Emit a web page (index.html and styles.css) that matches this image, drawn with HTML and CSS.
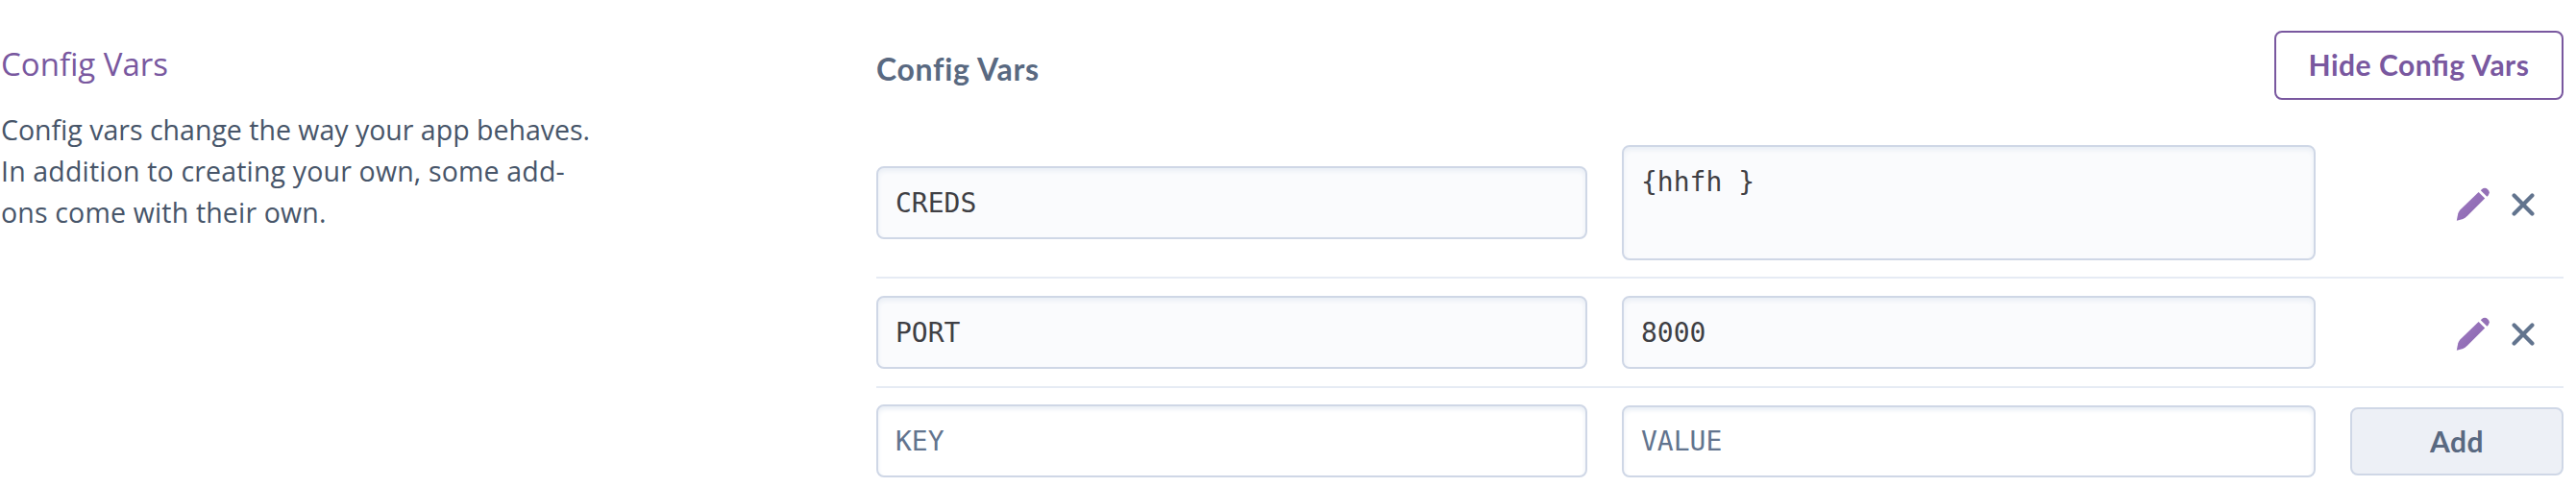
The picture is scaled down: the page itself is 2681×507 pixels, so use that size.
FILE: index.html
```html
<!DOCTYPE html>
<html lang="en">
<head>
<meta charset="utf-8">
<title>Config Vars</title>
<link rel="stylesheet" href="styles.css">
</head>
<body>
<svg class="defs" width="0" height="0" aria-hidden="true">
  <defs>
    <linearGradient id="pencil-fill" x1="0" y1="0" x2="1" y2="1">
      <stop offset="0" stop-color="#a07cc2"/>
      <stop offset="1" stop-color="#8864ae"/>
    </linearGradient>
    <symbol id="pencil" viewBox="0 0 36 36">
      <path fill="url(#pencil-fill)" d="M.8 34.8 2.2 27.6Q2.8 25.4 4.4 23.6L23.6 5 30.2 11.4 12.2 29.6Q10 31.8 7.4 33Z"/>
      <path fill="#9470b6" d="m25.8 3.2 1.2-1.2q3.2-2.6 6.2.2t.4 6.2L32.4 9.8Z"/>
    </symbol>
    <symbol id="cross" viewBox="0 0 24 24">
      <path d="M2.6 2.6 21.4 21.4M21.4 2.6 2.6 21.4" fill="none" stroke="#62748e" stroke-width="4.2" stroke-linecap="round"/>
    </symbol>
  </defs>
</svg>
<main class="page">
  <aside class="about">
    <h2 class="about-title">Config Vars</h2>
    <p class="about-text">Config vars change the way your app behaves.<br><span class="loose">In addition to creating your own, some add-<br>ons come with their own.</span></p>
  </aside>
  <section class="vars">
    <header class="vars-header">
      <h3 class="vars-title">Config Vars</h3>
      <button class="btn btn-outline">Hide Config Vars</button>
    </header>
    <div class="row row-first">
      <div class="field readonly">CREDS</div>
      <div class="field readonly multiline">{hhfh }</div>
      <div class="actions"><svg class="pencil"><use href="#pencil"/></svg><svg class="cross"><use href="#cross"/></svg></div>
    </div>
    <div class="row">
      <div class="field readonly">PORT</div>
      <div class="field readonly">8000</div>
      <div class="actions"><svg class="pencil"><use href="#pencil"/></svg><svg class="cross"><use href="#cross"/></svg></div>
    </div>
    <div class="row row-new">
      <div class="field placeholder">KEY</div>
      <div class="field placeholder short">VALUE</div>
      <button class="btn btn-add">Add</button>
    </div>
  </section>
</main>
</body>
</html>
```
FILE: styles.css
```css
* { box-sizing: border-box; }
body {
  margin: 0;
  background: #fff;
  font-family: "Open Sans", "Noto Sans", sans-serif;
  font-feature-settings: "liga" 1;
}
h2, h3, p { margin: 0; font-weight: 400; }
.defs { display: block; }
.page {
  display: grid;
  grid-template-columns: 912px 1756px;
  height: 507px;
  overflow: hidden;
}
.about { padding: 44px 0 0 1px; }
.about-title { font-size: 33px; line-height: 46px; color: #79589f; }
.about-text {
  margin-top: 24px;
  font-size: 28.5px;
  line-height: 43px;
  color: #475569;
  white-space: nowrap;
}
.loose { letter-spacing: 0.17px; }
.vars-header {
  display: flex;
  justify-content: space-between;
  height: 151px;
  padding-top: 32px;
}
.vars-title {
  padding-top: 18px;
  font: 700 32px/44px Lato, sans-serif;
  letter-spacing: 0.7px;
  color: #596981;
}
.btn {
  display: flex;
  align-items: center;
  justify-content: center;
  padding: 0 0 2px;
  border: 2px solid;
  border-radius: 8px;
  font: 700 30px Lato, sans-serif;
  font-feature-settings: "liga" 1;
  letter-spacing: 0.5px;
}
.btn-outline { width: 301px; height: 72px; background: #fff; color: #79589f; border-color: #79589f; }
.btn-add { height: 71px; margin-top: 1px; background: #edf0f6; color: #596981; border-color: #cfd7e6; }
.row {
  display: grid;
  grid-template-columns: 740px 722px 222px;
  column-gap: 36px;
  align-items: center;
  padding: 18px 0;
  border-bottom: 2px solid #e6ebf4;
}
.row-first { padding: 0 0 17px; }
.row-new { padding: 17px 0 0; border: 0; }
.field {
  height: 76px;
  padding: 0 18px;
  border: 2px solid #cfd7e6;
  border-radius: 8px;
  box-shadow: inset 0 3px 5px #e9eef5;
  background: #fff;
  font: 28px/74px "DejaVu Sans Mono", monospace;
  color: #3f3f44;
  white-space: pre;
}
.readonly { background: #fafbfd; }
.multiline { height: 120px; line-height: 73px; }
.placeholder { color: #62748e; }
.short { height: 75px; margin-top: 1px; line-height: 72px; }
.actions { display: flex; align-items: center; padding: 3px 0 0 110px; }
.pencil { width: 36px; height: 36px; }
.cross { width: 24px; height: 24px; margin: 1px 0 0 22px; }
```
